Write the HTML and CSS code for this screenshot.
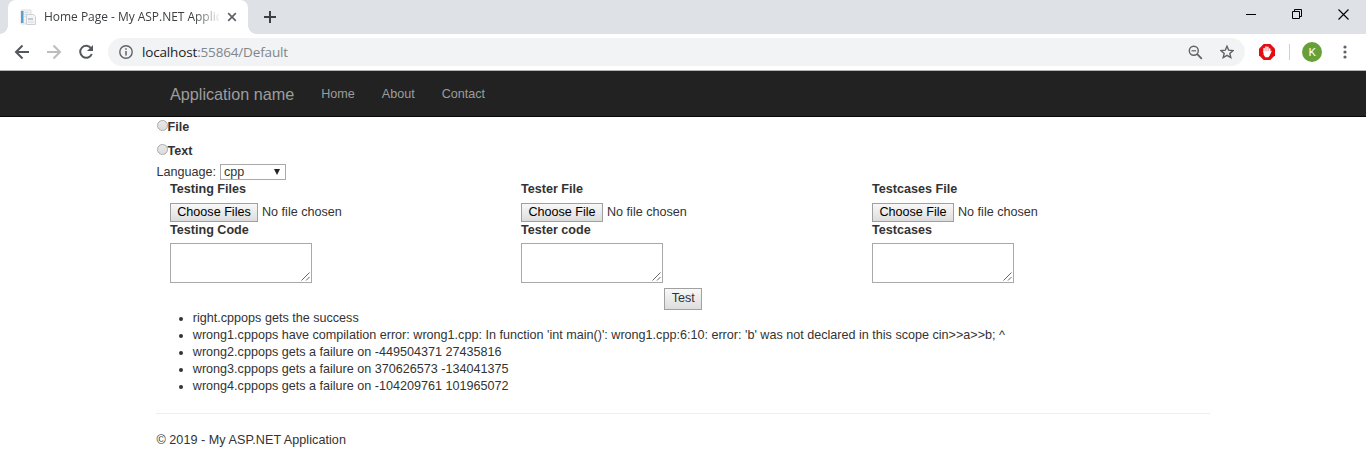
FILE: index.html
```html
<!DOCTYPE html>
<html lang="en">
<head>
<meta charset="utf-8">
<title>Home Page - My ASP.NET Application</title>
<link rel="stylesheet" href="styles.css">
</head>
<body>
<div class="tabstrip">
  <div class="tab">
    <svg class="favicon" width="16" height="16" viewBox="0 0 16 16"><path d="M1 1h10v14H1z" fill="#f1f2f3" stroke="#dddfe2"/><path d="M1 2h2.500v12H1z" fill="#5b9fce"/><path d="M4.500 3.500h4M4.500 5.500h2M4.500 7.500h2" stroke="#d5dce2"/><path d="M6.500 5.500h7l2 2v8h-9z" fill="#f4f5f7" stroke="#cdd1d6"/><path d="M8 9h5v2H8z" fill="#c3c9d0"/><path d="M8 13h6" stroke="#d6dade"/></svg>
    <span class="tab-title">Home Page - My ASP.NET Applic</span>
    <svg class="tab-close" width="10" height="10" viewBox="0 0 10 10"><path d="M1.200 1.200l7.600 7.600M8.800 1.200l-7.600 7.600" stroke="#5f6368" stroke-width="1.700"/></svg>
  </div>
  <svg class="newtab" width="12" height="12" viewBox="0 0 12 12"><path d="M6 0v12M0 6h12" stroke="#3c4043" stroke-width="2"/></svg>
  <div class="window-buttons">
    <svg width="10" height="11" viewBox="0 0 10 11"><path d="M0 5.500h10" stroke="#000"/></svg>
    <svg width="10" height="10" viewBox="0 0 10 10" fill="none" stroke="#000"><path d="M.5 2.500h7v7h-7zM2.500 2V.5h7v7H8"/></svg>
    <svg width="11" height="11" viewBox="0 0 11 11"><path d="M.5.5l10 10M10.500.5l-10 10" stroke="#000" stroke-width="1.100"/></svg>
  </div>
</div>
<div class="toolbar">
  <svg class="nav-icon" width="16" height="16" viewBox="0 0 16 16" fill="none" stroke="#54585d" stroke-width="2"><path d="M15 8H2.500M8.500 1.500L2 8l6.500 6.500"/></svg>
  <svg class="nav-icon" width="16" height="16" viewBox="0 0 16 16" fill="none" stroke="#bbbdbf" stroke-width="2"><path d="M1 8h12.500M7.500 1.500L14 8l-6.500 6.500"/></svg>
  <svg class="nav-icon" width="16" height="16" viewBox="0 0 16 16"><path d="M13.200 4.500A6 6 0 1 0 13.800 10" fill="none" stroke="#54585d" stroke-width="2"/><path d="M15 1v6H9z" fill="#54585d"/></svg>
  <div class="omnibox">
    <svg width="14" height="14" viewBox="0 0 14 14"><circle cx="7" cy="7" r="6.200" fill="none" stroke="#5f6368" stroke-width="1.400"/><path d="M7 6v4.500M7 3.300v1.500" stroke="#5f6368" stroke-width="1.500"/></svg>
    <span class="url">localhost<span class="path">:55864/Default</span></span>
    <svg class="magnifier" width="15" height="15" viewBox="0 0 15 15" fill="none" stroke="#5f6368"><circle cx="5.800" cy="5.800" r="4.500" stroke-width="1.400"/><path d="M3.500 5.800h4.600" stroke-width="1.200"/><path d="M9.200 9.200l4.600 4.600" stroke-width="1.800"/></svg>
    <svg width="14" height="14" viewBox="0 0 14 14"><path d="M7 1.200l1.700 4 4.300.4-3.200 2.800 1 4.200L7 10.400l-3.800 2.200 1-4.200L1 5.600l4.300-.4z" fill="none" stroke="#5f6368" stroke-width="1.400"/></svg>
  </div>
  <svg class="adblock" width="16" height="16" viewBox="0 0 16 16"><path d="M4.700 0h6.600L16 4.700v6.600L11.300 16H4.700L0 11.300V4.700z" fill="#e40d12"/><path d="M5.100 8V4.500M7 7.500V2.900M8.900 7.500V3.300M10.700 8.500V5" stroke="#fff" stroke-width="1.500" stroke-linecap="round"/><path d="M4.400 7.300h7l.9-.7.300.8-2 4.300-1.200 1.600H6.300L4.700 11z" fill="#fff"/></svg>
  <span class="divider"></span>
  <span class="avatar">K</span>
  <svg class="more" width="4" height="14" viewBox="0 0 4 14" fill="#5f6368"><circle cx="2" cy="2" r="1.600"/><circle cx="2" cy="7" r="1.600"/><circle cx="2" cy="12" r="1.600"/></svg>
</div>
<nav class="navbar">
  <a class="brand">Application name</a><a>Home</a><a>About</a><a>Contact</a>
</nav>
<main class="container">
  <label class="option"><i class="radio"></i><b>File</b></label>
  <label class="option"><i class="radio"></i><b>Text</b></label>
  <div class="language"><span>Language:</span><span class="select">cpp<svg width="6" height="6" viewBox="0 0 6 6"><path d="M0 0h6L3 6z" fill="#222"/></svg></span></div>
  <div class="columns">
    <section class="column">
      <b class="heading">Testing Files</b>
      <div class="file"><span class="button files">Choose Files</span><span>No file chosen</span></div>
      <b class="heading code">Testing Code</b>
      <div class="textarea"><svg width="9" height="9" viewBox="0 0 9 9"><path d="M.5 8.500l8-8M5 8.500L8.500 5" stroke="#666"/></svg></div>
    </section>
    <section class="column">
      <b class="heading">Tester File</b>
      <div class="file"><span class="button">Choose File</span><span>No file chosen</span></div>
      <b class="heading code">Tester code</b>
      <div class="textarea"><svg width="9" height="9" viewBox="0 0 9 9"><path d="M.5 8.500l8-8M5 8.500L8.500 5" stroke="#666"/></svg></div>
    </section>
    <section class="column">
      <b class="heading">Testcases File</b>
      <div class="file"><span class="button">Choose File</span><span>No file chosen</span></div>
      <b class="heading code">Testcases</b>
      <div class="textarea"><svg width="9" height="9" viewBox="0 0 9 9"><path d="M.5 8.500l8-8M5 8.500L8.500 5" stroke="#666"/></svg></div>
    </section>
  </div>
  <div class="submit"><span class="button test">Test</span></div>
  <ul class="results">
    <li><span>right.cppops gets the success</span></li>
    <li><span class="error">wrong1.cppops have compilation error: wrong1.cpp: In function 'int main()': wrong1.cpp:6:10: error: 'b' was not declared in this scope cin&gt;&gt;a&gt;&gt;b; ^</span></li>
    <li><span>wrong2.cppops gets a failure on -449504371 27435816</span></li>
    <li><span>wrong3.cppops gets a failure on 370626573 -134041375</span></li>
    <li><span>wrong4.cppops gets a failure on -104209761 101965072</span></li>
  </ul>
  <footer>© 2019 - My ASP.NET Application</footer>
</main>
</body>
</html>
```
FILE: styles.css
```css
* { box-sizing: border-box; }
body { margin: 0; background: #fff; color: #333; font: 12.6px/18px "Liberation Sans", Arial, sans-serif; height: 463px; overflow: hidden; }
svg { display: block; flex: none; }
.tabstrip { height: 34px; background: #dee1e6; display: flex; padding-left: 8px; }
.tab { position: relative; width: 240px; height: 34px; background: #fff; border-radius: 8px 8px 0 0; display: flex; align-items: center; padding-left: 12px; }
.tab::before, .tab::after { content: ""; position: absolute; bottom: 0; width: 8px; height: 8px; }
.tab::before { left: -8px; background: radial-gradient(circle at 0 0, transparent 7.5px, #fff 8px); }
.tab::after { right: -8px; background: radial-gradient(circle at 100% 0, transparent 7.5px, #fff 8px); }
.tab-title { width: 175px; margin-left: 8px; white-space: nowrap; font: 12px/18px "Open Sans", sans-serif; letter-spacing: -.03px; color: #3c4043; -webkit-mask-image: linear-gradient(to right, #000 150px, transparent 178px); mask-image: linear-gradient(to right, #000 150px, transparent 178px); }
.tab-close { margin-left: 8px; }
.newtab { margin: 11px 0 0 16px; }
.window-buttons { margin-left: auto; display: flex; gap: 36px; padding: 9px 17px 0 0; height: 20px; }
.toolbar { height: 37px; background: #fff; border-bottom: 1px solid #b1b3b5; display: flex; align-items: center; padding-left: 14px; }
.nav-icon { margin-right: 16px; }
.omnibox { width: 1137px; height: 28px; margin-left: -2px; border-radius: 14px; background: #f1f3f4; display: flex; align-items: center; padding: 0 11px; }
.url { margin-left: 9px; font: 13.5px/20px "Open Sans", sans-serif; color: #202124; letter-spacing: -.16px; }
.path { color: #80868b; }
.magnifier { margin: 0 17px 0 auto; }
.adblock { margin-left: 14px; }
.divider { width: 1px; height: 16px; background: #cfd1d4; margin-left: 14px; }
.avatar { width: 20px; height: 20px; border-radius: 50%; background: #679f38; color: #fff; margin-left: 12px; font: 11.5px/20px Roboto, sans-serif; text-align: center; }
.more { margin-left: 21px; }
.navbar { height: 46px; background: #222; border-bottom: 1px solid #080808; color: #9d9d9d; display: flex; align-items: center; padding-left: 170px; gap: 27px; }
.brand { font-size: 16.2px; }
.container { width: 1053.6px; margin-left: 156.4px; padding-top: 1px; }
.option { height: 24px; display: flex; align-items: flex-start; }
.radio { width: 11px; height: 11px; margin: 2px 0 0 .6px; flex: none; border: 1px solid #aaa; border-radius: 50%; background: linear-gradient(#e8e8e8, #dcdcdc); }
.option b { margin-left: -.4px; }
.language { height: 14px; margin-top: -1px; display: flex; align-items: center; gap: 4.1px; margin-bottom: 1px; }
.select { width: 66px; height: 16px; border: 1px solid #a9a9a9; background: #fff; display: flex; align-items: center; justify-content: space-between; padding: 0 5px 0 3px; }
.columns { display: grid; grid-template-columns: repeat(3, 351px); padding-left: 13.6px; height: 106px; }
.heading { display: block; height: 18px; }
.file { display: flex; align-items: flex-start; gap: 4px; height: 18px; margin-top: 5px; }
.button { height: 19px; border: 1px solid #a0a0a0; background: linear-gradient(#f8f8f8, #ddd); color: #000; width: 82px; text-align: center; line-height: 17px; white-space: nowrap; }
.files { width: 88px; }
.textarea { width: 142px; height: 40px; margin-top: 4px; border: 1px solid #a9a9a9; display: flex; justify-content: flex-end; align-items: flex-end; padding: 1px; }
.submit { display: flex; justify-content: center; height: 22px; margin-top: 2px; }
.test { width: 38px; height: 22px; line-height: 18px; color: #333; }
.results { list-style: none; margin: 0; padding: 0 0 0 22.6px; }
.results li { height: 17px; line-height: 17px; white-space: nowrap; display: flex; align-items: center; }
.results li::before { content: ""; width: 4px; height: 4px; border-radius: 50%; background: #333; margin-right: 9.8px; }
footer { border-top: 1px solid #eee; margin-top: 18px; padding-top: 17px; letter-spacing: .05px; }
```
